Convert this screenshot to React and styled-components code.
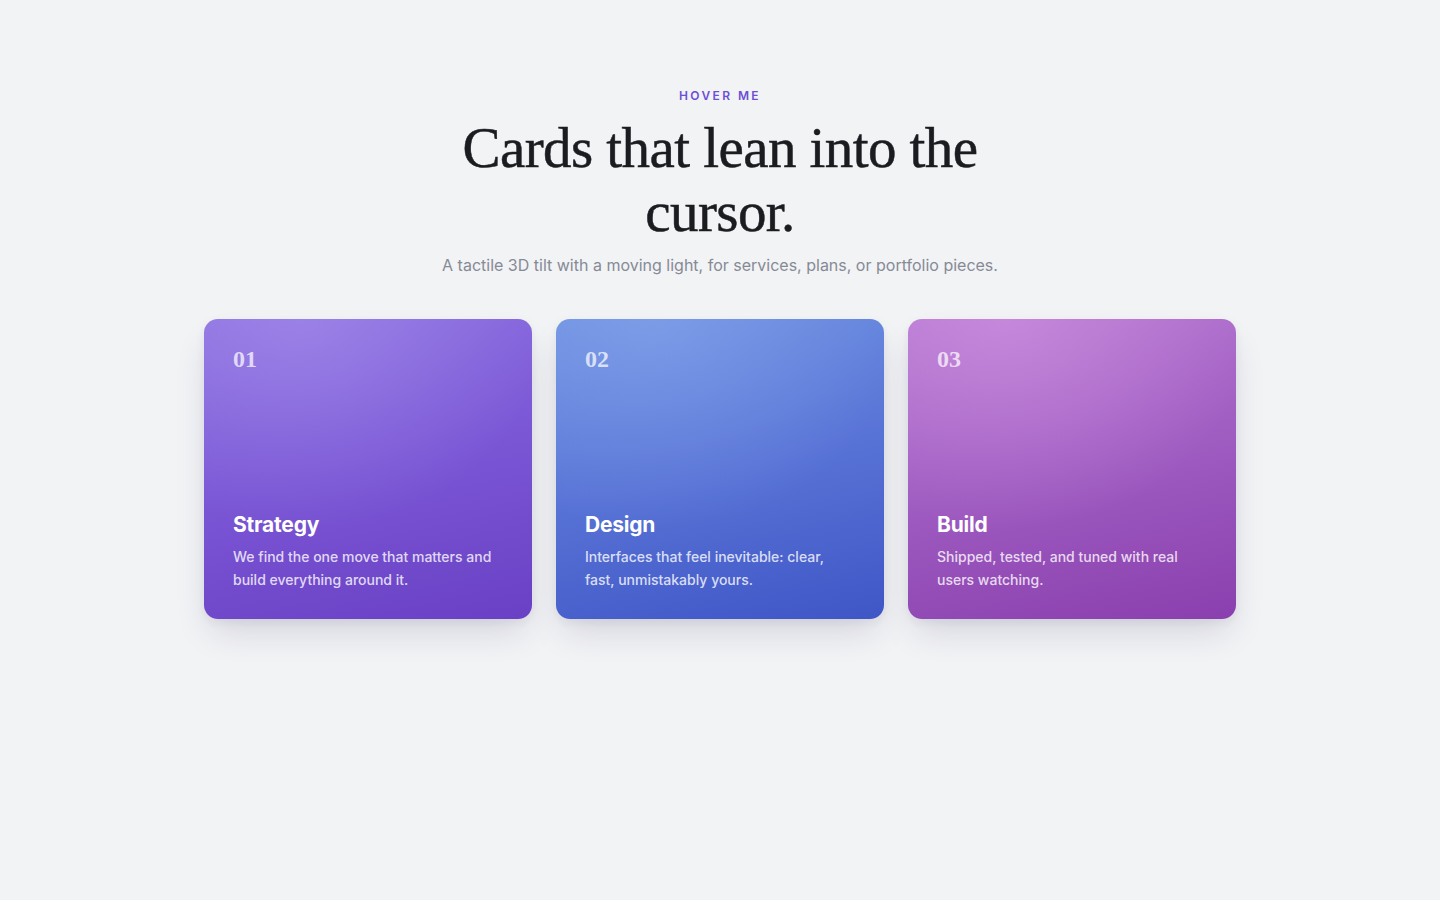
import React from 'react';
import styled, { createGlobalStyle } from 'styled-components';

const GlobalStyle = createGlobalStyle`
  html, body {
    margin: 0;
    padding: 0;
    background: #f2f3f5;
  }
  body {
    font-family: Inter, "Noto Sans", sans-serif;
    -webkit-font-smoothing: antialiased;
  }
`;

const Page = styled.main`
  min-height: 900px;
  box-sizing: border-box;
  padding: 88px 24px 80px;
  display: flex;
  flex-direction: column;
  align-items: center;
`;

const Eyebrow = styled.div`
  font-size: 12px;
  font-weight: 600;
  letter-spacing: 0.2em;
  color: #6d4fd6;
  text-transform: uppercase;
  line-height: 16px;
`;

const Title = styled.h1`
  margin: 12px 0 0;
  max-width: 580px;
  text-align: center;
  font-family: "Liberation Serif", "DejaVu Serif", serif;
  font-weight: 400;
  font-size: 57px;
  line-height: 64px;
  letter-spacing: -0.01em;
  color: #1b1c20;
  -webkit-text-stroke: 0.5px #1b1c20;
`;

const Lead = styled.p`
  margin: 9px 0 0;
  font-size: 16px;
  line-height: 24px;
  color: #868a95;
`;

const Grid = styled.section`
  margin-top: 42px;
  width: 1032px;
  display: grid;
  grid-template-columns: repeat(3, 1fr);
  gap: 24px;
`;

const palettes = {
  violet: {
    base: 'linear-gradient(168deg, #8c6fe0 0%, #7a56d5 50%, #6a40c4 100%)',
    glow: 'rgba(175, 155, 240, 0.45)',
  },
  blue: {
    base: 'linear-gradient(168deg, #6d8fe1 0%, #5873d6 50%, #3f56c6 100%)',
    glow: 'rgba(145, 175, 240, 0.45)',
  },
  orchid: {
    base: 'linear-gradient(168deg, #b577d1 0%, #9f5cc1 50%, #8a3fae 100%)',
    glow: 'rgba(215, 155, 230, 0.5)',
  },
};

const Card = styled.article`
  height: 300px;
  box-sizing: border-box;
  padding: 26px 29px 28px;
  border-radius: 14px;
  display: flex;
  flex-direction: column;
  justify-content: space-between;
  color: #fff;
  background:
    radial-gradient(ellipse 75% 70% at 30% 0%, ${p => palettes[p.tone].glow} 0%, rgba(255, 255, 255, 0) 100%),
    ${p => palettes[p.tone].base};
  box-shadow:
    0 18px 36px -8px rgba(40, 30, 80, 0.16),
    0 4px 10px rgba(40, 30, 80, 0.06);
`;

const Num = styled.div`
  font-family: "Liberation Serif", "DejaVu Serif", serif;
  font-size: 24px;
  font-weight: 700;
  line-height: 28px;
  color: rgba(255, 255, 255, 0.72);
`;

const Body = styled.div`
  display: flex;
  flex-direction: column;
  gap: 6px;
`;

const CardTitle = styled.h2`
  margin: 0;
  font-size: 21px;
  font-weight: 700;
  line-height: 28px;
  letter-spacing: -0.01em;
`;

const CardText = styled.p`
  margin: 0;
  max-width: 270px;
  font-size: 14px;
  font-weight: 500;
  line-height: 23px;
  color: rgba(255, 255, 255, 0.8);
`;

const cards = [
  { n: '01', tone: 'violet', title: 'Strategy', text: 'We find the one move that matters and build everything around it.' },
  { n: '02', tone: 'blue', title: 'Design', text: 'Interfaces that feel inevitable: clear, fast, unmistakably yours.' },
  { n: '03', tone: 'orchid', title: 'Build', text: 'Shipped, tested, and tuned with real users watching.' },
];

export default function App() {
  return (
    <>
      <GlobalStyle />
      <Page>
        <Eyebrow>Hover me</Eyebrow>
        <Title>Cards that lean into the cursor.</Title>
        <Lead>A tactile 3D tilt with a moving light, for services, plans, or portfolio pieces.</Lead>
        <Grid>
          {cards.map(c => (
            <Card key={c.n} tone={c.tone}>
              <Num>{c.n}</Num>
              <Body>
                <CardTitle>{c.title}</CardTitle>
                <CardText>{c.text}</CardText>
              </Body>
            </Card>
          ))}
        </Grid>
      </Page>
    </>
  );
}
